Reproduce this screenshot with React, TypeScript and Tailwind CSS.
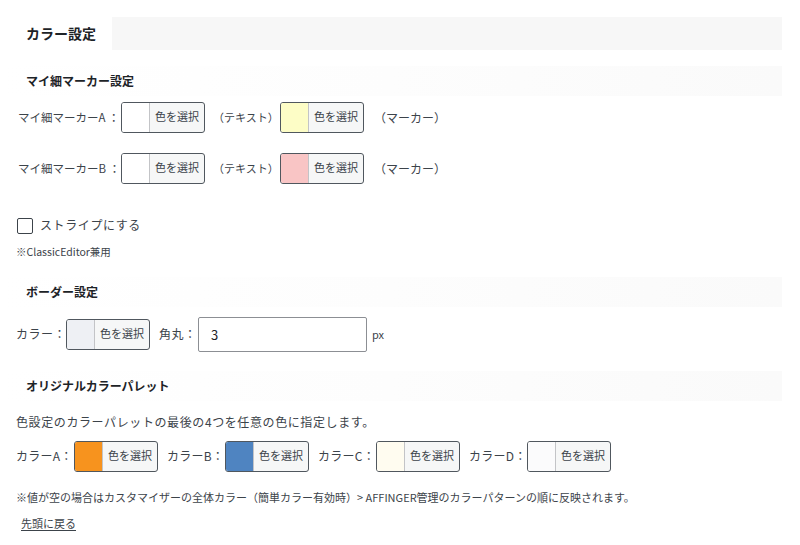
import React from 'react';

const FONT = '[font-family:"Noto_Sans_CJK_JP","Noto_Sans",sans-serif]';

interface ColorButtonProps {
    swatch: string;
}

const ColorButton: React.FC<ColorButtonProps> = ({ swatch }) => (
    <button
        type="button"
        className="flex h-[31px] w-[84px] shrink-0 overflow-hidden rounded-[3px] border border-[#50575e] bg-[#f6f7f7]"
    >
        <span className="h-full w-[28px] border-r border-[#c3c4c7]" style={{ backgroundColor: swatch }} />
        <span className="flex h-full flex-1 items-center justify-center pb-[3px] text-[11px] text-[#3c434a]">
            色を選択
        </span>
    </button>
);

const SectionTitle: React.FC<{ children: React.ReactNode }> = ({ children }) => (
    <div className="flex h-[30px] items-center bg-gradient-to-r from-white via-[#fdfdfd] to-[#fafafa] pl-[26px] text-[12px] font-bold text-[#1d2327]">
        {children}
    </div>
);

export default function App() {
    return (
        <div className={`h-[545px] w-[800px] overflow-hidden whitespace-nowrap bg-white text-[12px] text-[#3c434a] ${FONT}`}>
            {/* main heading */}
            <div className="ml-[12px] mt-[17px] flex h-[33px] w-[770px]">
                <div className="flex w-[100px] items-center bg-white pl-[14px] text-[14px] font-bold text-[#1d2327]">
                    カラー設定
                </div>
                <div className="flex-1 bg-[#f7f7f7]" />
            </div>

            <div className="mt-[16px] w-[782px]">
                <SectionTitle>マイ細マーカー設定</SectionTitle>
            </div>

            <div className="mt-[6px] flex flex-col gap-[20px] pl-[18px]">
                {[
                    { label: 'マイ細マーカーA', marker: '#fdfdc6' },
                    { label: 'マイ細マーカーB', marker: '#f9c5c5' },
                ].map((row) => (
                    <div key={row.label} className="flex items-center">
                        <span className="w-[103px] text-[11.5px]">{row.label} ：</span>
                        <ColorButton swatch="#ffffff" />
                        <span className="ml-[8px] w-[67px] text-[11px]">（テキスト）</span>
                        <ColorButton swatch={row.marker} />
                        <span className="ml-[10px]">（マーカー）</span>
                    </div>
                ))}
            </div>

            <label className="mt-[32px] flex items-center pl-[17px]">
                <span className="h-[16px] w-[16px] rounded-[2px] border border-[#3c434a] bg-white" />
                <span className="ml-[7px] pb-[2px] tracking-[0.05em]">ストライプにする</span>
            </label>

            <p className="mt-[8px] pl-[16px] text-[10.5px]">※ClassicEditor兼用</p>

            <div className="mt-[17px] w-[782px]">
                <SectionTitle>ボーダー設定</SectionTitle>
            </div>

            <div className="mt-[10px] flex items-center pl-[16px]">
                <span className="w-[50px] tracking-[0.04em]">カラー：</span>
                <ColorButton swatch="#eef0f4" />
                <span className="ml-[9px] w-[39px] tracking-[0.04em]">角丸：</span>
                <div className="flex h-[35px] w-[169px] items-center rounded-[2px] border border-[#8c8f94] bg-white pl-[12px] text-[13px] text-[#1d2327]">
                    3
                </div>
                <span className="ml-[5px] text-[11px]">px</span>
            </div>

            <div className="mt-[19px] w-[782px]">
                <SectionTitle>オリジナルカラーパレット</SectionTitle>
            </div>

            <p className="mt-[12px] pl-[16px] tracking-[0.05em]">色設定のカラーパレットの最後の4つを任意の色に指定します。</p>

            <div className="mt-[10px] flex items-center pl-[16px]">
                {[
                    { label: 'カラーA', swatch: '#f7931e' },
                    { label: 'カラーB', swatch: '#4f84c1' },
                    { label: 'カラーC', swatch: '#fffcf0' },
                    { label: 'カラーD', swatch: '#fbfbfc' },
                ].map((c) => (
                    <div key={c.label} className="mr-[9px] flex items-center">
                        <span className="w-[58px] tracking-[0.02em]">{c.label}：</span>
                        <ColorButton swatch={c.swatch} />
                    </div>
                ))}
            </div>

            <p className="mt-[17px] pl-[16px] text-[11px]">
                ※値が空の場合はカスタマイザーの全体カラー（簡単カラー有効時）&gt; AFFINGER管理のカラーパターンの順に反映されます。
            </p>

            <a href="#" className="mt-[10px] ml-[21px] inline-block text-[11px] text-[#3c434a] underline underline-offset-2">
                先頭に戻る
            </a>
        </div>
    );
}
